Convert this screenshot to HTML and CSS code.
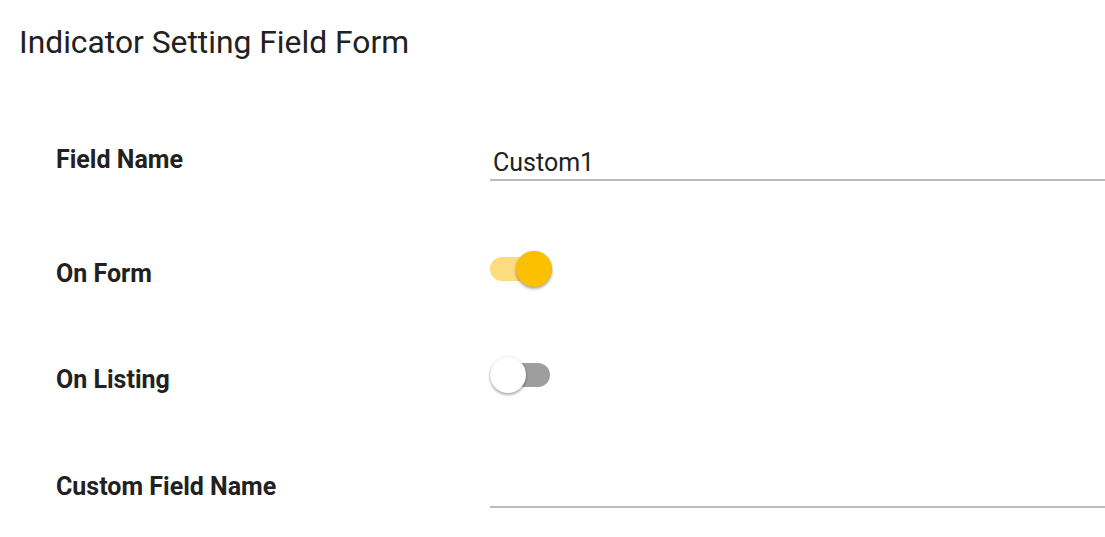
FILE: index.html
```html
<!DOCTYPE html>
<html lang="en">
<head>
    <meta charset="UTF-8">
    <meta name="viewport" content="width=device-width, initial-scale=1.0">
    <title>Indicator Setting Field Form</title>
    <link rel="stylesheet" href="styles.css">
</head>
<body>
    <h1 class="form-title">Indicator Setting Field Form</h1>
    <div class="field-form">
        <div class="form-row row-input">
            <label class="form-label">Field Name</label>
            <div class="form-control">
                <input class="text-input" type="text" value="Custom1">
            </div>
        </div>
        <div class="form-row row-switch">
            <label class="form-label">On Form</label>
            <div class="form-control">
                <span class="switch switch-on"><span class="switch-thumb"></span></span>
            </div>
        </div>
        <div class="form-row row-switch">
            <label class="form-label">On Listing</label>
            <div class="form-control">
                <span class="switch"><span class="switch-thumb"></span></span>
            </div>
        </div>
        <div class="form-row row-input">
            <label class="form-label">Custom Field Name</label>
            <div class="form-control">
                <input class="text-input" type="text" value="">
            </div>
        </div>
    </div>
</body>
</html>
```

FILE: styles.css
```css
* {
    margin: 0;
    padding: 0;
    box-sizing: border-box;
}
body {
    font-family: Roboto, "Liberation Sans", sans-serif;
    color: #212121;
    background: #ffffff;
    overflow: hidden;
}
.form-title {
    font-size: 31.8px;
    font-weight: 400;
    line-height: 38px;
    padding: 23px 0 0 19px;
    color: #212121;
}
.field-form {
    padding: 69px 0 0 56px;
}
.form-row {
    display: grid;
    grid-template-columns: 434px 1fr;
    align-items: center;
    height: 60px;
}
.row-input + .row-switch {
    margin-top: 54px;
}
.row-switch + .row-switch {
    margin-top: 46px;
}
.row-switch + .row-input {
    margin-top: 47px;
}
.form-label {
    font-size: 25px;
    line-height: 30px;
    font-weight: 700;
    color: #212121;
}
.text-input {
    display: block;
    width: 100%;
    border: none;
    border-bottom: 2px solid #bdbdbd;
    outline: none;
    font-family: Roboto, "Liberation Sans", sans-serif;
    font-size: 25px;
    line-height: 30px;
    height: 41px;
    color: #212121;
    padding: 8px 2px 1px 3px;
    background: transparent;
}
.switch {
    position: relative;
    display: block;
    width: 60px;
    height: 24px;
    margin-bottom: 11px;
    border-radius: 12px;
    background: #9e9e9e;
}
.switch-thumb {
    position: absolute;
    left: 0;
    top: -6px;
    width: 36px;
    height: 36px;
    border-radius: 50%;
    background: #ffffff;
    box-shadow: 0 2px 3px rgba(0, 0, 0, .3), 0 0 2px rgba(0, 0, 0, .15);
}
.switch-on {
    background: #fddc7f;
}
.switch-on .switch-thumb {
    left: 26px;
    background: #fbc000;
}
```
